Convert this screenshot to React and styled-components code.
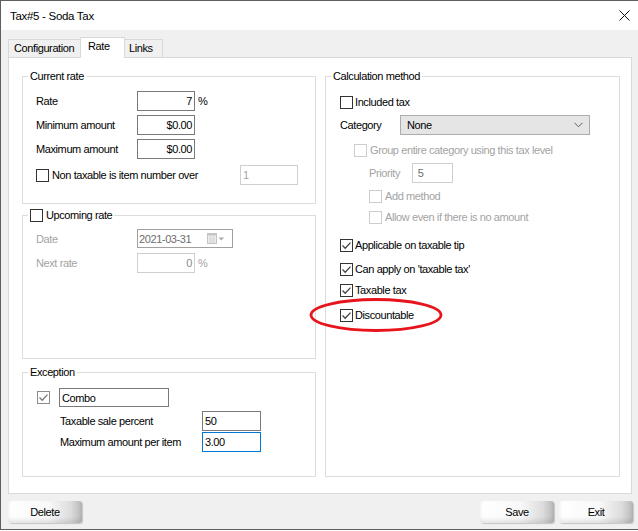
import React from 'react';
import styled, { createGlobalStyle } from 'styled-components';

const GlobalStyle = createGlobalStyle`
  html, body {
    margin: 0;
    padding: 0;
    background: #fff;
  }
  * {
    box-sizing: border-box;
  }
`;

const Window = styled.div`
  position: relative;
  width: 638px;
  height: 530px;
  border-top: 1px solid #5f5f5f;
  border-left: 1px solid #5f5f5f;
  border-bottom: 1px solid #5f5f5f;
  background: #f0f0f0;
  display: flex;
  flex-direction: column;
  font-family: "Liberation Sans", Arial, sans-serif;
  font-size: 11px;
  letter-spacing: -0.4px;
  color: #000;
`;

const TitleBar = styled.div`
  flex: none;
  height: 29px;
  background: #fff;
  display: flex;
  align-items: center;
  justify-content: space-between;
  padding: 0 8px 0 9px;
`;

const Title = styled.span`
  font-size: 11.5px;
  letter-spacing: -0.3px;
`;

const Body = styled.div`
  flex: 1;
  display: flex;
  flex-direction: column;
  padding: 7px 5px 0 7px;
`;

const TabStrip = styled.div`
  display: flex;
  align-items: flex-end;
  height: 20px;
`;

const Tab = styled.div`
  position: relative;
  z-index: ${(p) => (p.$active ? 1 : 0)};
  width: ${(p) => p.$w}px;
  height: ${(p) => (p.$active ? 21 : 18)}px;
  margin-right: -1px;
  margin-bottom: ${(p) => (p.$active ? -1 : 0)}px;
  padding-left: ${(p) => p.$pl}px;
  border: 1px solid #d9d9d9;
  border-bottom: none;
  background: ${(p) => (p.$active ? '#fff' : '#f0f0f0')};
  line-height: 17px;
  white-space: nowrap;
`;

const TabPanel = styled.div`
  width: 624px;
  height: 437px;
  background: #fff;
  border: 1px solid #d9d9d9;
  display: grid;
  grid-template-columns: 294px 295px;
  column-gap: 9px;
  padding: 18px 11px 16px 13px;
`;

const Column = styled.div`
  display: flex;
  flex-direction: column;
`;

const GroupBox = styled.div`
  height: ${(p) => p.$h}px;
  margin-top: ${(p) => p.$mt || 0}px;
  border: 1px solid #dcdcdc;
  display: flex;
  flex-direction: column;
`;

const Legend = styled.div`
  align-self: flex-start;
  margin: -7px 0 0 5px;
  padding: 0 2px;
  height: 13px;
  line-height: 13px;
  background: #fff;
  display: flex;
  align-items: center;
  gap: 3px;
`;

const GroupBody = styled.div`
  display: flex;
  flex-direction: column;
  padding: ${(p) => p.$pt}px 0 0 ${(p) => p.$pl}px;
`;

const Row = styled.div`
  display: flex;
  align-items: center;
  height: ${(p) => p.$h || 20}px;
  margin-top: ${(p) => p.$mt || 0}px;
  padding-left: ${(p) => p.$indent || 0}px;
  gap: ${(p) => p.$gap || 0}px;
`;

const Label = styled.span`
  flex: none;
  width: ${(p) => (p.$w ? `${p.$w}px` : 'auto')};
  color: ${(p) => (p.$disabled ? '#a3a3a3' : '#000')};
  white-space: nowrap;
`;

const borderFor = {
  normal: '#7a7a7a',
  disabled: '#cfcfcf',
  focus: '#0078d7',
};

const TextBox = styled.div`
  flex: none;
  width: ${(p) => p.$w}px;
  height: ${(p) => p.$h || 20}px;
  margin-left: ${(p) => p.$ml || 0}px;
  border: 1px solid ${(p) => borderFor[p.$state || 'normal']};
  background: #fff;
  display: flex;
  align-items: center;
  justify-content: ${(p) => (p.$right ? 'flex-end' : 'flex-start')};
  padding: 0 2px;
  color: ${(p) => p.$color || '#000'};
  white-space: nowrap;
`;

const Unit = styled.span`
  margin-left: 3px;
  color: ${(p) => (p.$disabled ? '#a3a3a3' : '#000')};
`;

const DatePicker = styled.div`
  flex: none;
  width: 96px;
  height: 19px;
  border: 1px solid #a0a0a0;
  background: #fff;
  display: flex;
  align-items: center;
  justify-content: space-between;
  padding: 0 7px 0 1px;
  color: #6d6d6d;
`;

const Select = styled.div`
  flex: none;
  width: 190px;
  height: 20px;
  background: #e5e5e5;
  border: 1px solid #adadad;
  display: flex;
  align-items: center;
  justify-content: space-between;
  padding: 0 6px 0 6px;
`;

const checkTone = {
  normal: { border: '#333333', mark: '#444444' },
  soft: { border: '#8c8c8c', mark: '#7a7a7a' },
  disabled: { border: '#cccccc', mark: '#cccccc' },
};

const Box = styled.span`
  flex: none;
  width: 13px;
  height: 13px;
  border: 1px solid ${(p) => checkTone[p.$tone].border};
  background: #fff;
  display: inline-flex;
  align-items: center;
  justify-content: center;
`;

const Checkbox = ({ checked, tone = 'normal' }) => (
  <Box $tone={tone}>
    {checked && (
      <svg width="11" height="11" viewBox="0 0 11 11">
        <polyline
          points="1.5,5.5 4.2,8.2 9.5,2.6"
          fill="none"
          stroke={checkTone[tone].mark}
          strokeWidth="1.3"
        />
      </svg>
    )}
  </Box>
);

const ButtonBar = styled.div`
  display: flex;
  align-items: flex-start;
  padding-top: 7px;
  gap: 5px;
`;

const Button = styled.button`
  width: ${(p) => p.$w}px;
  height: 22px;
  margin-left: ${(p) => (p.$push ? 'auto' : '0')};
  border: none;
  border-radius: 3px;
  font: inherit;
  letter-spacing: inherit;
  color: #000;
  padding: 0;
  background: linear-gradient(to right, #ffffff 0%, #f8f8f8 55%, #dcdcdc 85%, #b9b9b9 100%);
  box-shadow: inset 0 -3px 4px rgba(0, 0, 0, 0.1), 1px 1px 1px rgba(0, 0, 0, 0.18);
`;

const Annotation = styled.svg`
  position: absolute;
  left: 307px;
  top: 296px;
  pointer-events: none;
`;

const CloseIcon = () => (
  <svg width="11" height="11" viewBox="0 0 11 11">
    <path d="M0.5 0.5 L10.5 10.5 M10.5 0.5 L0.5 10.5" stroke="#111" strokeWidth="1" />
  </svg>
);

const CalendarIcon = () => (
  <svg width="18" height="12" viewBox="0 0 18 12">
    <rect x="0.5" y="0.5" width="9" height="10" fill="#ececec" stroke="#c4c4c4" />
    <rect x="0.5" y="0.5" width="9" height="2" fill="#c4c4c4" />
    <path d="M2 5h6M2 7h6M2 9h6M3.5 3v7M6.5 3v7" stroke="#d6d6d6" strokeWidth="0.8" />
    <path d="M11.5 4.5 L17 4.5 L14.25 7.5 Z" fill="#a8a8a8" />
  </svg>
);

const Chevron = () => (
  <svg width="9" height="6" viewBox="0 0 9 6">
    <polyline points="0.5,0.8 4.5,4.8 8.5,0.8" fill="none" stroke="#606060" strokeWidth="1" />
  </svg>
);

export default function App() {
  return (
    <>
      <GlobalStyle />
      <Window>
        <TitleBar>
          <Title>Tax#5 - Soda Tax</Title>
          <CloseIcon />
        </TitleBar>
        <Body>
          <TabStrip>
            <Tab $w={73} $pl={5}>Configuration</Tab>
            <Tab $w={45} $pl={7} $active>Rate</Tab>
            <Tab $w={39} $pl={4}>Links</Tab>
          </TabStrip>
          <TabPanel>
            <Column>
              <GroupBox $h={128}>
                <Legend>Current rate</Legend>
                <GroupBody $pt={8} $pl={13}>
                  <Row>
                    <Label $w={101}>Rate</Label>
                    <TextBox $w={58} $right>7</TextBox>
                    <Unit>%</Unit>
                  </Row>
                  <Row $mt={4}>
                    <Label $w={101}>Minimum amount</Label>
                    <TextBox $w={58} $right>$0.00</TextBox>
                  </Row>
                  <Row $mt={4}>
                    <Label $w={101}>Maximum amount</Label>
                    <TextBox $w={58} $right>$0.00</TextBox>
                  </Row>
                  <Row $mt={6} $gap={3}>
                    <Checkbox />
                    <Label $w={185}>Non taxable is item number over</Label>
                    <TextBox $w={58} $state="disabled" $color="#a3a3a3">1</TextBox>
                  </Row>
                </GroupBody>
              </GroupBox>

              <GroupBox $h={144} $mt={11}>
                <Legend>
                  <Checkbox />
                  <span>Upcoming rate</span>
                </Legend>
                <GroupBody $pt={7} $pl={13}>
                  <Row $h={19}>
                    <Label $w={101} $disabled>Date</Label>
                    <DatePicker>
                      <span>2021-03-31</span>
                      <CalendarIcon />
                    </DatePicker>
                  </Row>
                  <Row $mt={5}>
                    <Label $w={101} $disabled>Next rate</Label>
                    <TextBox $w={58} $right $state="disabled" $color="#8a8a8a">0</TextBox>
                    <Unit $disabled>%</Unit>
                  </Row>
                </GroupBody>
              </GroupBox>

              <GroupBox $h={105} $mt={13}>
                <Legend>Exception</Legend>
                <GroupBody $pt={9} $pl={14}>
                  <Row $h={19} $gap={9}>
                    <Checkbox checked tone="soft" />
                    <TextBox $w={110} $h={19}>Combo</TextBox>
                  </Row>
                  <Row $mt={4} $indent={23}>
                    <Label $w={142}>Taxable sale percent</Label>
                    <TextBox $w={59}>50</TextBox>
                  </Row>
                  <Row $mt={1} $indent={23}>
                    <Label $w={142}>Maximum amount per item</Label>
                    <TextBox $w={59} $state="focus">3.00</TextBox>
                  </Row>
                </GroupBody>
              </GroupBox>
            </Column>

            <Column>
              <GroupBox $h={401}>
                <Legend>Calculation method</Legend>
                <GroupBody $pt={9} $pl={14}>
                  <Row $gap={2}>
                    <Checkbox />
                    <Label>Included tax</Label>
                  </Row>
                  <Row $mt={3}>
                    <Label $w={60}>Category</Label>
                    <Select>
                      <span>None</span>
                      <Chevron />
                    </Select>
                  </Row>
                  <Row $mt={5} $indent={14} $gap={3}>
                    <Checkbox tone="disabled" />
                    <Label $disabled>Group entire category using this tax level</Label>
                  </Row>
                  <Row $mt={3} $indent={29}>
                    <Label $w={43} $disabled>Priority</Label>
                    <TextBox $w={41} $state="disabled" $color="#6d6d6d">
                      &nbsp;5
                    </TextBox>
                  </Row>
                  <Row $mt={3} $indent={29} $gap={3}>
                    <Checkbox tone="disabled" />
                    <Label $disabled>Add method</Label>
                  </Row>
                  <Row $mt={1} $indent={29} $gap={3}>
                    <Checkbox tone="disabled" />
                    <Label $disabled>Allow even if there is no amount</Label>
                  </Row>
                  <Row $mt={8} $gap={2}>
                    <Checkbox checked />
                    <Label>Applicable on taxable tip</Label>
                  </Row>
                  <Row $mt={4} $gap={2}>
                    <Checkbox checked />
                    <Label>Can apply on 'taxable tax'</Label>
                  </Row>
                  <Row $mt={1} $gap={2}>
                    <Checkbox checked />
                    <Label>Taxable tax</Label>
                  </Row>
                  <Row $mt={5} $gap={2}>
                    <Checkbox checked />
                    <Label>Discountable</Label>
                  </Row>
                </GroupBody>
              </GroupBox>
            </Column>
          </TabPanel>

          <ButtonBar>
            <Button $w={74}>Delete</Button>
            <Button $w={74} $push>Save</Button>
            <Button $w={74}>Exit</Button>
          </ButtonBar>
        </Body>

        {/* red hand-drawn highlight over the Discountable option */}
        <Annotation width="138" height="38" viewBox="0 0 138 38">
          <ellipse cx="68" cy="18" rx="65" ry="15.5" fill="none" stroke="#e8141c" strokeWidth="2.8" />
        </Annotation>
      </Window>
    </>
  );
}
